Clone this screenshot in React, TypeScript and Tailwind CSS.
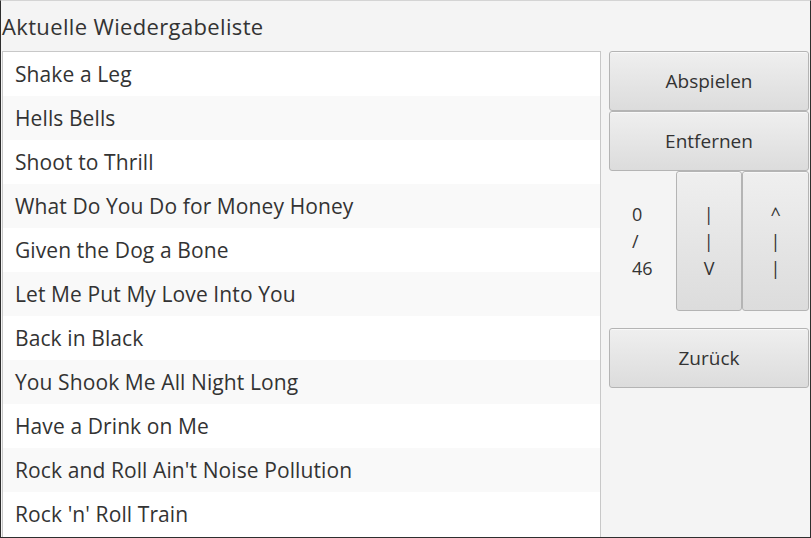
import React from "react";

const songs = [
  "Shake a Leg",
  "Hells Bells",
  "Shoot to Thrill",
  "What Do You Do for Money Honey",
  "Given the Dog a Bone",
  "Let Me Put My Love Into You",
  "Back in Black",
  "You Shook Me All Night Long",
  "Have a Drink on Me",
  "Rock and Roll Ain't Noise Pollution",
  "Rock 'n' Roll Train",
];

const btn =
  "flex items-center justify-center rounded-[3px] border border-[#b4b4b4] bg-gradient-to-b from-[#efefef] to-[#dcdcdc] text-[#333] shadow-[inset_0_1px_0_#f8f8f8]";

function Stack({ lines }: { lines: string[] }) {
  return (
    <div className="flex flex-col items-start leading-[27px]">
      {lines.map((l, i) => (
        <span key={i}>{l}</span>
      ))}
    </div>
  );
}

export default function App() {
  return (
    <div className="w-[811px] h-[538px] flex flex-col bg-[#f4f4f4] border-x border-b border-[#2e2e2e] border-t-[#d4d4d4] border-t font-['Open_Sans',sans-serif] text-[#333]">
      <div className="h-[50px] flex items-center pl-px pt-px text-[22px] tracking-[0.35px]">
        Aktuelle Wiedergabeliste
      </div>
      <div className="flex flex-1 min-h-0">
        <div className="w-[599px] ml-px border-t border-x border-[#c8c8c8] bg-white overflow-hidden">
          {songs.map((s, i) => (
            <div
              key={s}
              className={`h-[44px] flex items-center pl-[12px] pt-[1px] text-[21px] tracking-[0.1px] ${
                i % 2 === 1 ? "bg-[#f9f9f9]" : "bg-white"
              }`}
            >
              {s}
            </div>
          ))}
        </div>
        <div className="flex-1 pl-[8px] pr-[1px] flex flex-col text-[19px]">
          <div className={`${btn} h-[60px]`}>Abspielen</div>
          <div className={`${btn} h-[60px]`}>Entfernen</div>
          <div className="grid grid-cols-3 h-[140px] text-[18px]">
            <div className="flex items-center justify-center">
              <Stack lines={["0", "/", "46"]} />
            </div>
            <div className={btn}>
              <Stack lines={["|", "|", "V"]} />
            </div>
            <div className={btn}>
              <Stack lines={["^", "|", "|"]} />
            </div>
          </div>
          <div className={`${btn} h-[60px] mt-[17px]`}>Zurück</div>
        </div>
      </div>
    </div>
  );
}
